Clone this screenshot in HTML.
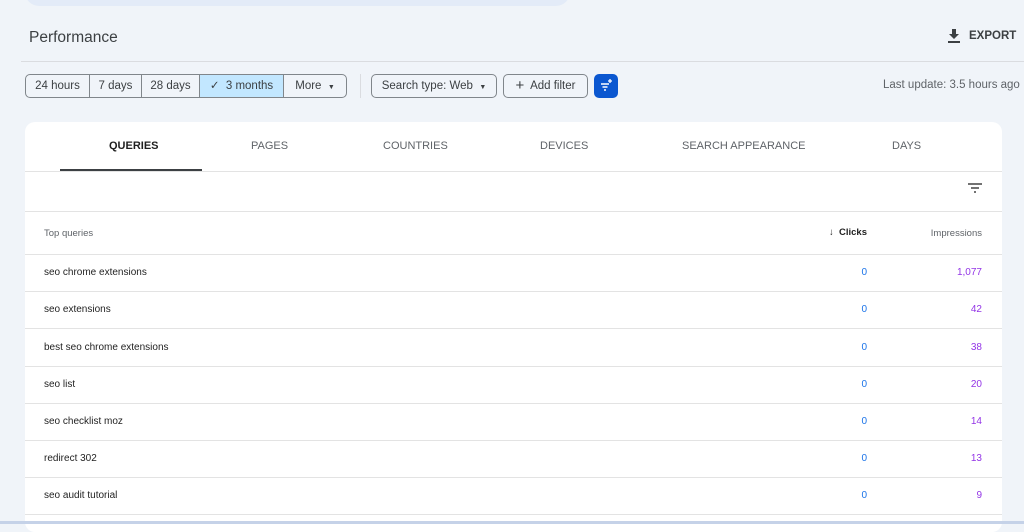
<!DOCTYPE html>
<html><head><style>
*{box-sizing:border-box;margin:0;padding:0}
body{width:1024px;height:524px;overflow:hidden;background:#f0f4f9;font-family:"Liberation Sans",sans-serif;position:relative;color:#1f1f1f}
.abs{position:absolute}
.topbar{left:25px;top:-20px;width:545px;height:26px;background:#e3ebf8;border-radius:0 0 14px 14px}
.title{left:29px;top:29px;font-size:15.5px;color:#3c4043}
.sep{left:21px;top:61px;width:1003px;height:1px;background:#dadce0}
.export{left:948px;top:29px;font-size:11.5px;font-weight:bold;color:#3c4043;display:flex;align-items:center;gap:9px}
.seg{left:25px;top:74px;height:24px;display:flex;border:1px solid #80868b;border-radius:5px;overflow:hidden;font-size:11.5px;color:#3c4043}
.seg div{line-height:22px;border-right:1px solid #80868b;height:22px;text-align:center}
.seg div:last-child{border-right:none}
.seg .on{background:#c2e7ff}
.vs{left:360px;top:74px;width:1px;height:24px;background:#dadce0}
.btn{top:74px;height:24px;border:1px solid #80868b;border-radius:5px;font-size:11.5px;color:#3c4043;line-height:22px;text-align:center}
.fbtn{left:594px;top:74px;width:24px;height:24px;background:#0b57d0;border-radius:5px}
.upd{left:883px;top:79px;font-size:11.5px;color:#5f6368}
.card{left:25px;top:122px;width:977px;height:410px;background:#fff;border-radius:10px}
.tab{top:140px;font-size:11px;color:#5f6368;position:absolute}
.line{left:25px;width:977px;height:1px;background:#e3e3e3}
.q{left:44px;font-size:10px;color:#1f1f1f}
.c{right:157px;font-size:10px;color:#1a73e8;text-align:right}
.i{right:42px;font-size:10px;color:#9334e6;text-align:right}
</style></head><body>
<div class="abs topbar"></div>
<div class="abs title">Performance</div>
<div class="abs export"><svg width="12" height="14" viewBox="0 0 12 14"><path d="M4 0h4v5h3L6 10 1 5h3z" fill="#3c4043"/><rect x="0" y="12" width="12" height="2" fill="#3c4043"/></svg><span>EXPORT</span></div>
<div class="abs sep"></div>
<div class="abs seg"><div style="width:64px">24 hours</div><div style="width:52px">7 days</div><div style="width:58px">28 days</div><div class="on" style="width:84px">✓&nbsp; 3 months</div><div style="width:62px">More &nbsp;<span style="font-size:7px">▼</span></div></div>
<div class="abs vs"></div>
<div class="abs btn" style="left:371px;width:126px">Search type: Web &nbsp;<span style="font-size:7px">▼</span></div>
<div class="abs btn" style="left:503px;width:85px"><span style="font-size:15px;vertical-align:-1px">+</span>&nbsp; Add filter</div>
<div class="abs fbtn"><svg width="24" height="24" viewBox="0 0 24 24"><path d="M7 10h8M8.5 13h5M10 16h2" stroke="#fff" stroke-width="1.4"/><path d="M16 5v4M14 7h4" stroke="#fff" stroke-width="1.3"/></svg></div>
<div class="abs upd">Last update: 3.5 hours ago</div>
<div class="abs card"></div>
<div class="tab" style="left:109px;color:#1f1f1f;font-weight:bold">QUERIES</div>
<div class="tab" style="left:251px">PAGES</div>
<div class="tab" style="left:383px">COUNTRIES</div>
<div class="tab" style="left:540px">DEVICES</div>
<div class="tab" style="left:682px">SEARCH APPEARANCE</div>
<div class="tab" style="left:892px">DAYS</div>
<div class="abs" style="left:60px;top:169px;width:142px;height:2px;background:#3c4043"></div>
<div class="abs line" style="top:171px"></div>
<svg class="abs" style="left:967px;top:182px" width="16" height="12" viewBox="0 0 16 12"><path d="M1 2h14M4 6h8M7 10h2" stroke="#444" stroke-width="1.5"/></svg>
<div class="abs line" style="top:211px"></div>
<div class="abs q" style="top:228px;font-size:9.5px;color:#5f6368">Top queries</div>
<div class="abs c" style="top:227px;color:#1f1f1f;font-weight:bold;font-size:9.5px">↓&nbsp; Clicks</div>
<div class="abs i" style="top:228px;color:#5f6368;font-size:9.5px">Impressions</div>
<div class="abs line" style="top:254px"></div>
<div class="abs q" style="top:267px">seo chrome extensions</div><div class="abs c" style="top:267px">0</div><div class="abs i" style="top:267px">1,077</div>
<div class="abs line" style="top:291px"></div>
<div class="abs q" style="top:304px">seo extensions</div><div class="abs c" style="top:304px">0</div><div class="abs i" style="top:304px">42</div>
<div class="abs line" style="top:328px"></div>
<div class="abs q" style="top:342px">best seo chrome extensions</div><div class="abs c" style="top:342px">0</div><div class="abs i" style="top:342px">38</div>
<div class="abs line" style="top:366px"></div>
<div class="abs q" style="top:379px">seo list</div><div class="abs c" style="top:379px">0</div><div class="abs i" style="top:379px">20</div>
<div class="abs line" style="top:403px"></div>
<div class="abs q" style="top:416px">seo checklist moz</div><div class="abs c" style="top:416px">0</div><div class="abs i" style="top:416px">14</div>
<div class="abs line" style="top:440px"></div>
<div class="abs q" style="top:453px">redirect 302</div><div class="abs c" style="top:453px">0</div><div class="abs i" style="top:453px">13</div>
<div class="abs line" style="top:477px"></div>
<div class="abs q" style="top:490px">seo audit tutorial</div><div class="abs c" style="top:490px">0</div><div class="abs i" style="top:490px">9</div>
<div class="abs line" style="top:514px"></div>
<div class="abs" style="left:0;top:521px;width:1024px;height:3px;background:#c5d2e8"></div>
</body></html>
